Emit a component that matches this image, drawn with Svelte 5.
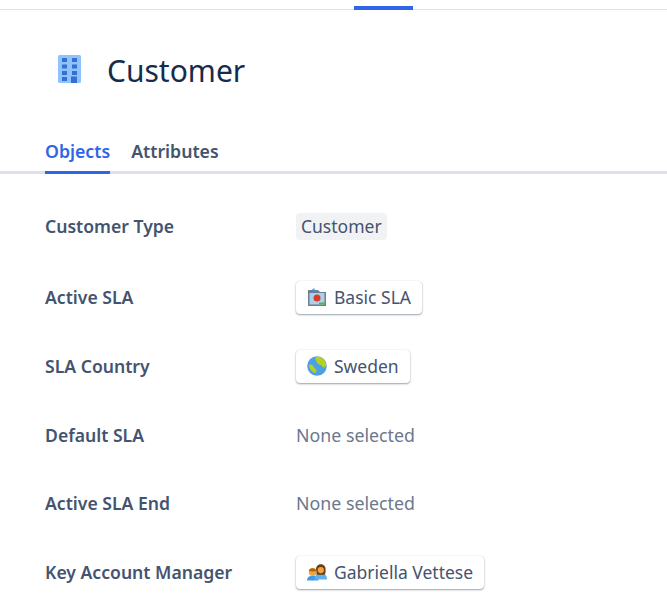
<script lang="ts">
	const tabs = ['Objects', 'Attributes'];
</script>

<div class="page">
	<div class="topbar"><span class="top-indicator"></span></div>

	<header class="head">
		<svg class="head-icon" width="23" height="28" viewBox="0 0 23 28" aria-hidden="true">
			<rect width="23" height="28" rx="1.5" fill="#90c2fb" />
			<g fill="#3470cf">
				<rect x="4" y="3" width="5" height="4" />
				<rect x="14" y="3" width="5" height="4" />
				<rect x="4" y="9.500" width="5" height="4" />
				<rect x="14" y="9.500" width="5" height="4" />
				<rect x="4" y="16" width="5" height="4" />
				<rect x="14" y="16" width="5" height="4" />
				<rect x="4" y="22" width="5" height="4" />
				<rect x="13" y="21.500" width="6" height="6.500" />
			</g>
		</svg>
		<h1>Customer</h1>
	</header>

	<nav class="tabs">
		{#each tabs as tab, i}
			<span class="tab" class:active={i === 0}>{tab}</span>
		{/each}
	</nav>

	<div class="rows">
		<div class="row first">
			<span class="label">Customer Type</span>
			<span class="tag">Customer</span>
		</div>
		<div class="row">
			<span class="label">Active SLA</span>
			<span class="chip">
				<svg width="20" height="20" viewBox="0 0 20 20" aria-hidden="true">
					<path d="M1 3h10l2 2h6v14H1z" fill="#6f7f8c" />
					<rect x="2.500" y="6" width="15" height="11.500" fill="#a9d0ee" />
					<circle cx="10" cy="11" r="3.500" fill="#dc3a24" />
					<rect x="12" y="15.500" width="6" height="2" fill="#58b947" />
					<path d="M4 3.500l3.500-2.500v5z" fill="#3d8fe0" />
				</svg>
				Basic SLA
			</span>
		</div>
		<div class="row">
			<span class="label">SLA Country</span>
			<span class="chip">
				<svg width="20" height="20" viewBox="0 0 20 20" aria-hidden="true">
					<circle cx="10" cy="10" r="9.800" fill="#4d9fe6" />
					<path d="M9 1c4-1 8.500 1.500 10 6.500 .5 3-1 4.500-2.500 4s-2-3-4-3-2-2-3-3-1.500-3-.5-4.500z" fill="#b5cf22" />
					<path d="M2 9c2-1 4 0 5 2s2 2 2.500 3.500-1 2.500-2.500 2.500C4 15 2 12 2 9z" fill="#b5cf22" />
				</svg>
				Sweden
			</span>
		</div>
		<div class="row">
			<span class="label">Default SLA</span>
			<span class="none">None selected</span>
		</div>
		<div class="row">
			<span class="label">Active SLA End</span>
			<span class="none">None selected</span>
		</div>
		<div class="row">
			<span class="label">Key Account Manager</span>
			<span class="chip">
				<svg width="20" height="20" viewBox="0 0 21 20" aria-hidden="true">
					<path d="M0 19c0-4 3-5 6-5s6 1 6 5z" fill="#3f9be8" />
					<path d="M8 18c0-5 3-7 6.500-7s6.500 2 6.500 7z" fill="#5cb0f0" />
					<path d="M9.500 7c0-7 10-7 10 0 0 2.500 0 4.500-1 6h-8c-1-1.500-1-3.500-1-6z" fill="#6e3d17" />
					<circle cx="14.500" cy="8" r="3.300" fill="#f0a63a" />
					<circle cx="6" cy="10" r="4.200" fill="#f0a63a" />
					<path d="M2 9c.5-4 7-4 8 0-2 .5-6 .5-8 0z" fill="#a8651c" />
				</svg>
				Gabriella Vettese
			</span>
		</div>
	</div>
</div>

<style>
	:global(body) {
		background: #fff;
		overflow: hidden;
	}

	.page {
		height: 606px;
		overflow: hidden;
		font-family: 'Noto Sans', 'Open Sans', sans-serif;
		color: #172b4d;
	}

	.topbar {
		height: 9px;
		border-bottom: 1px solid #dfe1e6;
		padding-left: 354px;
		display: flex;
		align-items: flex-end;
	}

	.top-indicator {
		width: 59px;
		height: 4px;
		background: #2f65e6;
		margin-bottom: -1px;
	}

	.head {
		display: flex;
		align-items: center;
		gap: 26px;
		padding: 31px 0 0 58px;
		height: 60px;
	}

	.head-icon {
		margin-top: -5px;
	}

	h1 {
		margin: 0;
		font-size: 30px;
		font-weight: 400;
		line-height: 44px;
		color: #172b4d;
	}

	.tabs {
		display: flex;
		gap: 21px;
		margin-top: 37px;
		padding-left: 45px;
		height: 33px;
		border-bottom: 3px solid #dfe1e9;
	}

	.tab {
		font-size: 17.700px;
		font-weight: 600;
		line-height: 26px;
		color: #44546f;
		height: 33px;
	}

	.tab.active {
		color: #2f65e6;
		border-bottom: 3px solid #2f65e6;
	}

	.rows {
		display: flex;
		flex-direction: column;
	}

	.row {
		display: grid;
		grid-template-columns: 251px 1fr;
		align-items: center;
		justify-items: start;
		padding-left: 45px;
		height: 68.700px;
	}

	.row.first {
		height: 70px;
		margin-top: 17px;
		margin-bottom: 2px;
	}

	.label {
		font-size: 17.600px;
		font-weight: 600;
		color: #44546f;
	}

	.tag {
		background: #f1f2f4;
		border-radius: 4px;
		padding: 0 5px;
		font-size: 17.500px;
		line-height: 27px;
		color: #44546f;
	}

	.chip {
		display: inline-flex;
		align-items: center;
		gap: 7px;
		height: 33px;
		box-sizing: border-box;
		padding: 0 11px;
		background: #fff;
		border-radius: 4px;
		box-shadow: 0 1px 2px rgba(9, 30, 66, 0.4), 0 0 1px rgba(9, 30, 66, 0.2);
		font-size: 17.500px;
		color: #44546f;
	}

	.none {
		font-size: 17.800px;
		color: #6b778c;
	}
</style>
